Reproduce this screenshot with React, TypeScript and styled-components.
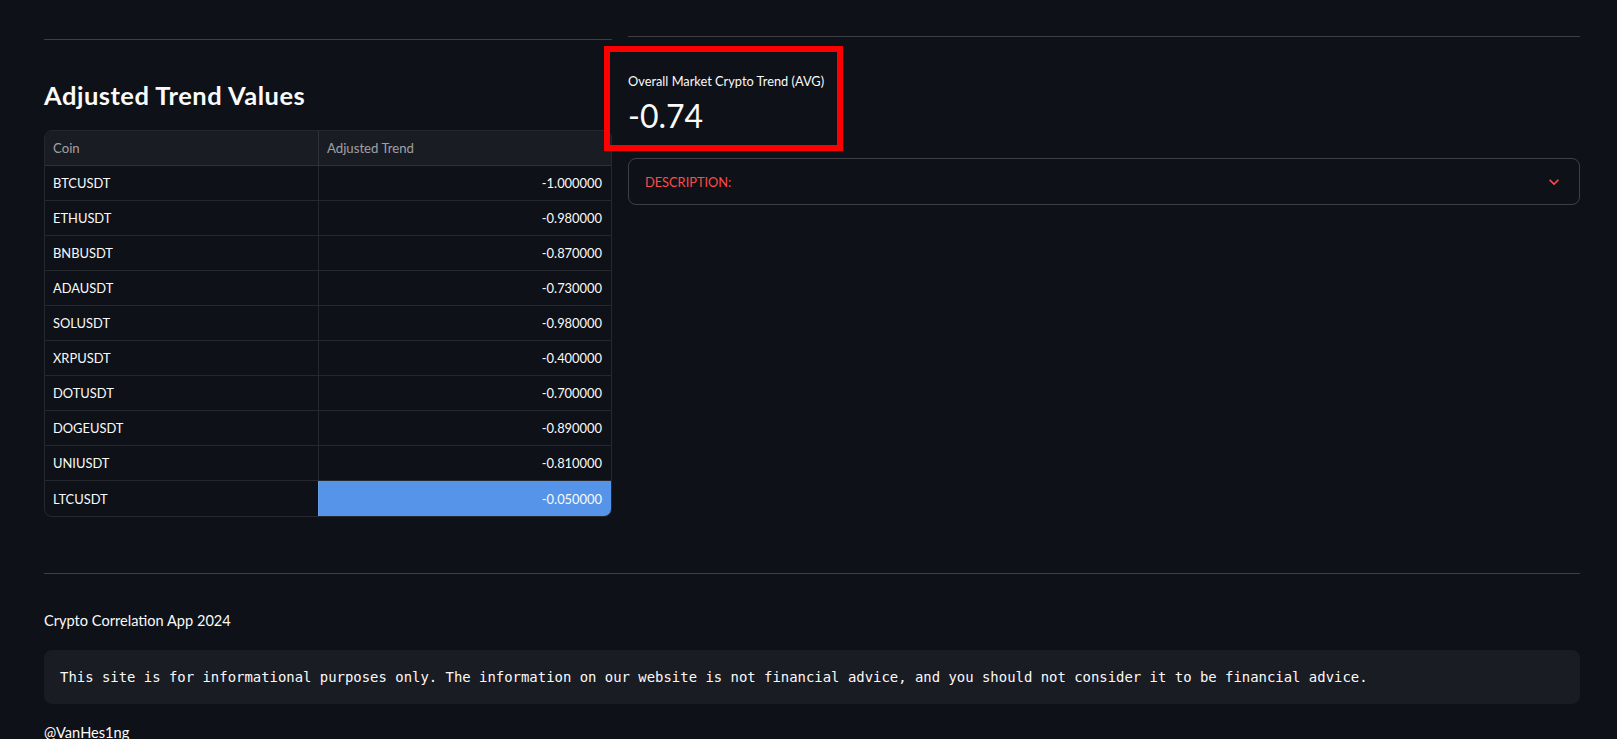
import React from "react";
import styled, { createGlobalStyle } from "styled-components";

const GlobalStyle = createGlobalStyle`
  html, body {
    margin: 0;
    padding: 0;
    background: #0e1117;
    color: #fafafa;
    font-family: Lato, "Noto Sans", sans-serif;
  }
  * { box-sizing: border-box; }
`;

const Page = styled.main`
  padding: 0 37px 0 44px;
  min-height: 739px;
`;

const TopGrid = styled.div`
  display: grid;
  grid-template-columns: 568px 1fr;
  column-gap: 16px;
  align-items: start;
`;

const Column = styled.section`
  display: flex;
  flex-direction: column;
  min-width: 0;
`;

const Divider = styled.hr<{ $top: number }>`
  margin: ${(p) => p.$top}px 0 0 0;
  border: none;
  height: 1px;
  background: rgba(250, 250, 250, 0.2);
`;

const Heading = styled.h3`
  margin: 38px 0 0 0;
  font-size: 25.5px;
  line-height: 34px;
  font-weight: 700;
  letter-spacing: 0.5px;
  color: #fafafa;
`;

const Table = styled.div`
  margin-top: 18px;
  border: 1px solid rgba(250, 250, 250, 0.1);
  border-radius: 8px;
  overflow: hidden;
  display: grid;
  grid-template-columns: 273px 1fr;
`;

const HeadCell = styled.div<{ $first?: boolean }>`
  height: 35px;
  display: flex;
  align-items: center;
  padding: 0 8px;
  background: #1a1c24;
  color: rgba(250, 250, 250, 0.6);
  font-size: 13.2px;
  border-bottom: 1px solid rgba(250, 250, 250, 0.1);
  border-left: ${(p) => (p.$first ? "none" : "1px solid rgba(250, 250, 250, 0.1)")};
`;

const Cell = styled.div<{ $num?: boolean; $selected?: boolean; $last?: boolean }>`
  height: 35px;
  display: flex;
  align-items: center;
  justify-content: ${(p) => (p.$num ? "flex-end" : "flex-start")};
  padding: 0 9px 0 8px;
  font-size: 12.9px;
  color: #fafafa;
  background: ${(p) => (p.$selected ? "#5594e8" : "transparent")};
  border-bottom: ${(p) => (p.$last ? "none" : "1px solid rgba(250, 250, 250, 0.1)")};
  border-left: ${(p) => (p.$num ? "1px solid rgba(250, 250, 250, 0.1)" : "none")};
`;

const MetricBox = styled.div`
  margin: 9px 0 0 -24px;
  width: 239px;
  height: 105px;
  border: 6px solid #ff0000;
  padding: 19px 0 0 18px;
  display: flex;
  flex-direction: column;
`;

const MetricLabel = styled.div`
  font-size: 12.8px;
  line-height: 20px;
  white-space: nowrap;
  color: #fafafa;
`;

const MetricValue = styled.div`
  margin-top: 3px;
  font-size: 32px;
  line-height: 44px;
  white-space: nowrap;
  color: #fafafa;
`;

const Expander = styled.div`
  margin-top: 7px;
  height: 47px;
  border: 1px solid rgba(250, 250, 250, 0.2);
  border-radius: 8px;
  display: flex;
  align-items: center;
  justify-content: space-between;
  padding: 0 15px 0 16px;
`;

const ExpanderTitle = styled.span`
  font-size: 12.8px;
  color: #ff4b4b;
`;

const Footer = styled.footer`
  display: flex;
  flex-direction: column;
`;

const FooterText = styled.p<{ $top: number }>`
  margin: ${(p) => p.$top}px 0 0 0;
  font-size: 14.6px;
  line-height: 24px;
  color: #fafafa;
`;

const CodeBlock = styled.pre`
  margin: 17px 0 0 0;
  height: 54px;
  background: #1a1c24;
  border-radius: 8px;
  padding: 0 16px;
  display: flex;
  align-items: center;
  font-family: "DejaVu Sans Mono", "Liberation Mono", monospace;
  font-size: 13.93px;
  color: #fafafa;
  white-space: pre;
  overflow: hidden;
`;

const rows: [string, string][] = [
  ["BTCUSDT", "-1.000000"],
  ["ETHUSDT", "-0.980000"],
  ["BNBUSDT", "-0.870000"],
  ["ADAUSDT", "-0.730000"],
  ["SOLUSDT", "-0.980000"],
  ["XRPUSDT", "-0.400000"],
  ["DOTUSDT", "-0.700000"],
  ["DOGEUSDT", "-0.890000"],
  ["UNIUSDT", "-0.810000"],
  ["LTCUSDT", "-0.050000"],
];

const ChevronDown = () => (
  <svg width="20" height="20" viewBox="0 0 24 24" fill="#ff4b4b" aria-hidden="true">
    <path d="M16.59 8.59L12 13.17 7.41 8.59 6 10l6 6 6-6z" />
  </svg>
);

export default function App() {
  return (
    <>
      <GlobalStyle />
      <Page>
        <TopGrid>
          <Column>
            <Divider $top={39} />
            <Heading>Adjusted Trend Values</Heading>
            <Table>
              <HeadCell $first>Coin</HeadCell>
              <HeadCell>Adjusted Trend</HeadCell>
              {rows.map(([coin, val], i) => (
                <React.Fragment key={coin}>
                  <Cell $last={i === rows.length - 1}>{coin}</Cell>
                  <Cell $num $last={i === rows.length - 1} $selected={i === rows.length - 1}>
                    {val}
                  </Cell>
                </React.Fragment>
              ))}
            </Table>
          </Column>
          <Column>
            <Divider $top={36} />
            <MetricBox>
              <MetricLabel>Overall Market Crypto Trend (AVG)</MetricLabel>
              <MetricValue>-0.74</MetricValue>
            </MetricBox>
            <Expander>
              <ExpanderTitle>DESCRIPTION:</ExpanderTitle>
              <ChevronDown />
            </Expander>
          </Column>
        </TopGrid>
        <Footer>
          <Divider $top={56} />
          <FooterText $top={35}>Crypto Correlation App 2024</FooterText>
          <CodeBlock>
            This site is for informational purposes only. The information on our website is not financial advice, and you should not consider it to be financial advice.
          </CodeBlock>
          <FooterText $top={17}>@VanHes1ng</FooterText>
        </Footer>
      </Page>
    </>
  );
}
